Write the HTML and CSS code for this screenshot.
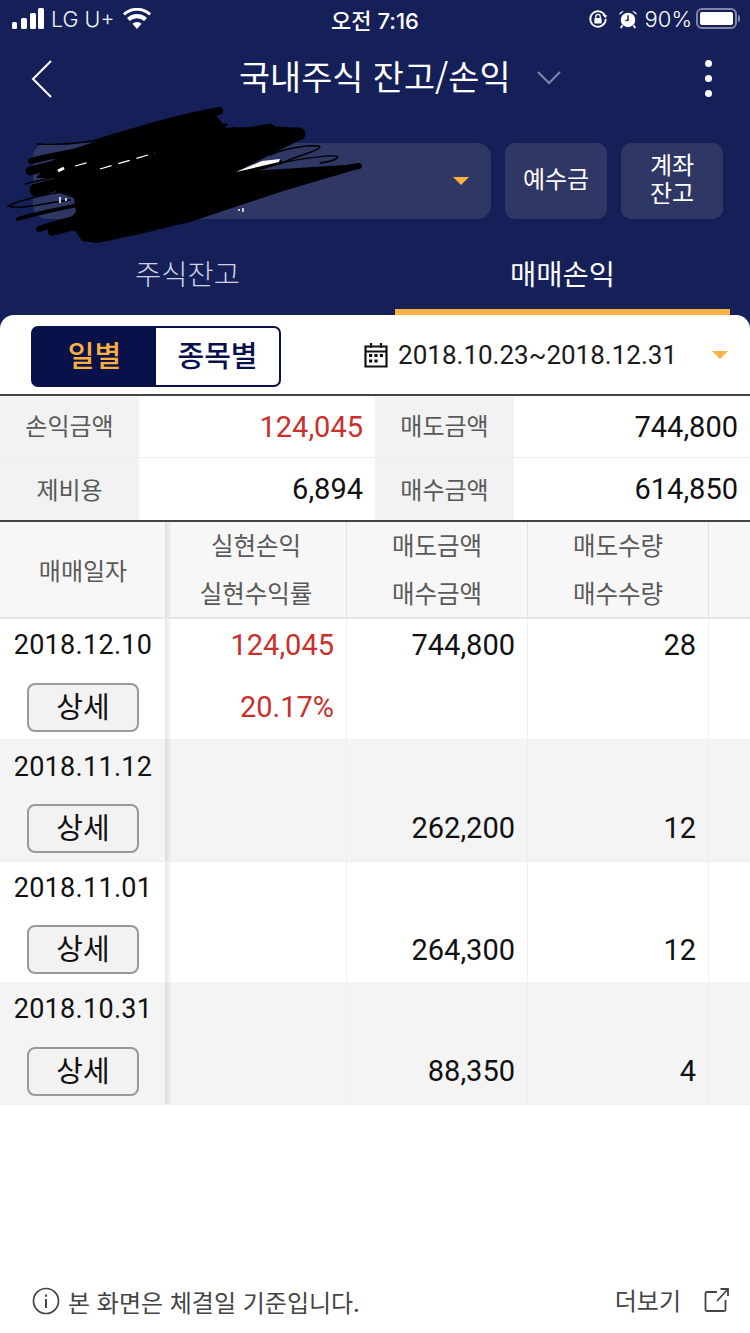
FILE: index.html
```html
<!DOCTYPE html>
<html lang="ko">
<head>
<meta charset="utf-8">
<title>국내주식 잔고/손익</title>
<link rel="stylesheet" href="styles.css">
</head>
<body>
<div class="app">
  <header class="top">
    <div class="status">
      <div class="status-side">
        <svg class="signal" width="33" height="22" viewBox="0 0 33 22"><rect x="0" y="14" width="5" height="7" rx="1.500"/><rect x="9" y="10" width="6" height="11" rx="1.500"/><rect x="18" y="5" width="6" height="16" rx="1.500"/><rect x="26" y="0" width="6" height="21" rx="1.500"/></svg>
        <span class="carrier">LG U+</span>
        <svg class="wifi" width="28" height="22" viewBox="0 0 28 22"><path d="M14 21l-4.600-5.200a6.600 6.600 0 0 1 9.200 0zM6.800 13l-2.800-3a14.600 14.600 0 0 1 20 0l-2.800 3a10.600 10.600 0 0 0-14.400 0zM1.800 7.500L0 5.200a21 21 0 0 1 28 0l-1.800 2.300a18 18 0 0 0-24.400 0z"/></svg>
      </div>
      <div class="status-time">오전 7:16</div>
      <div class="status-side status-right">
        <svg width="20" height="20" viewBox="0 0 22 22" class="lock"><path d="M18.500 7A8.500 8.500 0 1 0 19.500 11" fill="none" stroke="#fff" stroke-width="2"/><path d="M16 6.500l5 .5-1.500 3.500z" fill="#fff"/><rect x="7" y="10" width="8" height="6" rx="1" fill="#fff"/><path d="M8.500 10V8.500a2.500 2.500 0 0 1 5 0V10" fill="none" stroke="#fff" stroke-width="1.400"/></svg>
        <svg width="20" height="20" viewBox="0 0 22 22" class="alarm"><circle cx="11" cy="12" r="8" fill="#fff"/><path d="M11 7v5.500h-3" fill="none" stroke="#152058" stroke-width="1.600"/><path d="M1.500 6.500a4 4 0 0 1 5-4zM20.500 6.500a4 4 0 0 0-5-4z" fill="#fff"/><path d="M5 18l-2 3M17 18l2 3" stroke="#fff" stroke-width="2"/></svg>
        <span class="battery-pct">90%</span>
        <span class="battery"><span class="battery-fill"></span></span>
        <span class="battery-nub"></span>
      </div>
    </div>

    <div class="titlebar">
      <svg class="back" width="22" height="40" viewBox="0 0 22 40"><path d="M20 2L2 20l18 18" fill="none" stroke="#fff" stroke-width="2"/></svg>
      <div class="title-group">
        <h1 class="title">국내주식 잔고/손익</h1>
        <svg class="title-caret" width="24" height="14" viewBox="0 0 24 14"><path d="M1 1l11 11L23 1" fill="none" stroke="#7f87a8" stroke-width="2"/></svg>
      </div>
      <div class="more"><i></i><i></i><i></i></div>
    </div>

    <div class="account-row">
      <div class="account">
        <span class="caret"></span>
      </div>
      <button class="chip">예수금</button>
      <button class="chip">계좌<br>잔고</button>
      <svg class="scribble" width="380" height="150" viewBox="0 0 380 150">
        <g fill="none" stroke="#000" stroke-linecap="round">
          <path stroke-width="1.500" d="M37 44C60 45 85 44 110 37"/>
          <path stroke-width="8" d="M100 42C140 30 180 18 219 11"/>
          <path stroke-width="3" d="M100 44C140 34 190 28 226 25"/>
          <path stroke-width="3" d="M150 40C180 36 210 33 232 31"/>
          <path stroke-width="6" d="M31 61C90 46 150 42 235 30"/>
          <path stroke-width="9" d="M30 71C100 52 180 46 270 28"/>
          <path stroke-width="1.500" d="M25 84C100 66 200 44 296 29"/>
          <path stroke-width="13" d="M36 90C120 66 200 50 299 34"/>
          <path stroke-width="1.500" d="M8 106C30 96 60 92 90 88"/>
          <path stroke-width="1.500" d="M8 106C20 110 40 104 70 100"/>
          <path stroke-width="4" d="M18 119C80 100 200 88 280 62"/>
          <path stroke-width="6" d="M39 129C100 108 230 88 359 66"/>
          <path stroke-width="8" d="M52 132C100 118 160 112 230 96"/>
          <path stroke-width="1.500" d="M270 55C290 46 320 44 320 47C318 52 300 54 280 64"/>
          <path stroke-width="1.500" d="M285 62C305 58 336 54 338 57C336 60 328 62 320 63"/>
        </g>
        <path fill="#000" d="M70 50L100 40L215 14L226 28L270 26L300 28L304 38L236 72L361 64L361 68L280 92L190 122L140 134L97 143L82 141L76 132L66 122L76 112L74 98L56 92L60 78L36 78L50 62z"/>
        <g fill="none" stroke="#fff">
          <path stroke-width="3" d="M58 71L64 68"/>
          <path stroke-width="1.200" stroke-dasharray="12 7" d="M75 66L90 62M100 69L155 53"/>
          <path stroke-width="1.500" d="M60 97V103M66 98V101M238 110H240M243 108V112"/>
        </g>
        <path fill="#fff" d="M236 72L262 61L280 59L279 62L262 66z"/>
      </svg>
    </div>

    <nav class="tabs">
      <div class="tab">주식잔고</div>
      <div class="tab tab-on">매매손익</div>
    </nav>
  </header>

  <main class="panel">
    <div class="filter">
      <div class="toggle">
        <div class="toggle-on">일별</div>
        <div class="toggle-off">종목별</div>
      </div>
      <div class="range">
        <svg width="24" height="26" viewBox="0 0 24 26"><path d="M1.500 4.500h21v20h-21zM1.500 9.500h21" fill="none" stroke="#111" stroke-width="2.200"/><path d="M7 1v5M17 1v5" stroke="#111" stroke-width="2.200"/><g fill="#111"><rect x="5" y="12" width="3.200" height="3"/><rect x="10.400" y="12" width="3.200" height="3"/><rect x="15.800" y="12" width="3.200" height="3"/><rect x="5" y="17.500" width="3.200" height="3"/><rect x="10.400" y="17.500" width="3.200" height="3"/></g></svg>
        <span class="range-text">2018.10.23~2018.12.31</span>
        <span class="caret range-caret"></span>
      </div>
    </div>

    <section class="summary">
      <div class="sum-label">손익금액</div><div class="sum-value red">124,045</div>
      <div class="sum-label">매도금액</div><div class="sum-value">744,800</div>
      <div class="sum-label">제비용</div><div class="sum-value">6,894</div>
      <div class="sum-label">매수금액</div><div class="sum-value">614,850</div>
    </section>

    <section class="table">
      <div class="row head">
        <div class="cell c-date head-single">매매일자</div>
        <div class="cell c-num head-cell"><span>실현손익</span><span>실현수익률</span></div>
        <div class="cell c-num head-cell"><span>매도금액</span><span>매수금액</span></div>
        <div class="cell c-num head-cell"><span>매도수량</span><span>매수수량</span></div>
        <div class="cell c-rest"></div>
      </div>

      <div class="row r1">
        <div class="cell c-date"><span class="date">2018.12.10</span><button class="detail">상세</button></div>
        <div class="cell c-num val red"><span>124,045</span><span>20.17%</span></div>
        <div class="cell c-num val"><span>744,800</span><span></span></div>
        <div class="cell c-num val"><span>28</span><span></span></div>
        <div class="cell c-rest"></div>
      </div>
      <div class="row r2 alt">
        <div class="cell c-date"><span class="date">2018.11.12</span><button class="detail">상세</button></div>
        <div class="cell c-num val"><span></span><span></span></div>
        <div class="cell c-num val"><span></span><span>262,200</span></div>
        <div class="cell c-num val"><span></span><span>12</span></div>
        <div class="cell c-rest"></div>
      </div>
      <div class="row r3">
        <div class="cell c-date"><span class="date">2018.11.01</span><button class="detail">상세</button></div>
        <div class="cell c-num val"><span></span><span></span></div>
        <div class="cell c-num val"><span></span><span>264,300</span></div>
        <div class="cell c-num val"><span></span><span>12</span></div>
        <div class="cell c-rest"></div>
      </div>
      <div class="row r4 alt">
        <div class="cell c-date"><span class="date">2018.10.31</span><button class="detail">상세</button></div>
        <div class="cell c-num val"><span></span><span></span></div>
        <div class="cell c-num val"><span></span><span>88,350</span></div>
        <div class="cell c-num val"><span></span><span>4</span></div>
        <div class="cell c-rest"></div>
      </div>
    </section>

    <footer class="foot">
      <div class="foot-note">
        <svg width="28" height="28" viewBox="0 0 28 28"><circle cx="14" cy="14" r="12.500" fill="none" stroke="#444" stroke-width="1.700"/><rect x="13" y="12" width="2" height="9" fill="#444"/><rect x="13" y="7.500" width="2" height="2.200" fill="#444"/></svg>
        <span>본 화면은 체결일 기준입니다.</span>
      </div>
      <div class="foot-more">
        <span>더보기</span>
        <svg width="26" height="26" viewBox="0 0 26 26"><path d="M13 5H3a1.500 1.500 0 0 0-1.500 1.500v16A1.500 1.500 0 0 0 3 24h17a1.500 1.500 0 0 0 1.500-1.500V13" fill="none" stroke="#444" stroke-width="1.800"/><path d="M13 14L24 2M16.500 2H24v7" fill="none" stroke="#444" stroke-width="1.800"/></svg>
      </div>
    </footer>
  </main>
</div>
</body>
</html>
```

FILE: styles.css
```css
* { box-sizing: border-box; }
html, body { margin: 0; padding: 0; }
body {
  width: 750px;
  height: 1333px;
  overflow: hidden;
  font-family: Roboto, "Noto Sans CJK KR", sans-serif;
  color: #111;
}
.app {
  width: 750px;
  height: 1333px;
  display: flex;
  flex-direction: column;
  background: #152058;
}
.top { height: 315px; flex: none; color: #fff; }

/* status bar */
.status {
  height: 37px;
  padding: 0 10px 0 12px;
  display: grid;
  grid-template-columns: 1fr auto 1fr;
  align-items: center;
}
.status-side { display: flex; align-items: center; }
.status-right { justify-content: flex-end; }
.signal { fill: #fff; }
.wifi { fill: #fff; margin-left: 9px; }
.carrier { font-family: Inter, sans-serif; font-size: 21.500px; margin-left: 6px; color: #f2f3f8; font-weight: 300; }
.status-time { font-family: Inter, "Noto Sans CJK KR", sans-serif; font-size: 22px; font-weight: 500; margin-left: -2px; }
.lock { margin-right: 10px; }
.alarm { margin-right: 7px; }
.battery-pct { font-family: Inter, sans-serif; font-size: 22px; font-weight: 300; margin-right: 4px; }
.battery {
  width: 41px;
  height: 21px;
  border: 2px solid #7f87a8;
  border-radius: 6px;
  padding: 2px;
  display: block;
}
.battery-fill { display: block; height: 100%; background: #fff; border-radius: 2px; width: 33px; }
.battery-nub { width: 2px; height: 7px; background: #7f87a8; margin-left: 1px; border-radius: 0 2px 2px 0; }

/* title */
.titlebar {
  height: 79px;
  padding: 0 38px 0 31px;
  display: flex;
  align-items: center;
}
.back { flex: none; margin-top: 4px; }
.title-group { display: flex; align-items: center; gap: 26px; margin-left: 186px; padding-bottom: 1px; }
.title { margin: 0; font-family: "Noto Sans CJK KR", sans-serif; font-size: 33.800px; font-weight: 400; line-height: 44px; }
.title-caret { margin-top: 4px; }
.more { display: flex; flex-direction: column; gap: 8px; align-items: center; margin-left: auto; margin-top: 4px; }
.more i { width: 7px; height: 7px; border-radius: 50%; background: #fff; display: block; }

/* account */
.account-row {
  position: relative;
  margin-top: 27px;
  padding: 0 27px 0 33px;
  display: flex;
  gap: 14px;
  height: 76px;
}
.account {
  flex: 1;
  background: #2f3764;
  border-radius: 14px;
  display: flex;
  align-items: center;
  justify-content: flex-end;
  padding-right: 22px;
}
.caret {
  width: 0;
  height: 0;
  border-left: 8px solid transparent;
  border-right: 8px solid transparent;
  border-top: 8px solid #fbb040;
  display: block;
}
.chip {
  width: 102px;
  border: 0;
  border-radius: 10px;
  background: #2f3764;
  color: #fff;
  font-family: "Noto Sans CJK KR", sans-serif;
  font-size: 24px;
  line-height: 28px;
  padding: 0 0 6px;
}
.scribble { position: absolute; left: 0; top: -43px; }

/* tabs */
.tabs { display: flex; height: 96px; }
.tab {
  width: 375px;
  height: 96px;
  padding-top: 35px;
  text-align: center;
  font-family: "Noto Sans CJK KR", sans-serif;
  font-size: 28.500px;
  line-height: 38px;
  color: #cfd3e2;
  font-weight: 300;
}
.tab-on { width: 335px; margin-left: 20px; color: #fff; font-weight: 400; border-bottom: 6px solid #fbb040; }

/* panel */
.panel {
  flex: 1;
  background: #fff;
  border-radius: 14px 14px 0 0;
  display: flex;
  flex-direction: column;
  min-height: 0;
}
.filter {
  height: 81px;
  flex: none;
  padding: 11px 22px 0 31px;
  display: flex;
  justify-content: space-between;
  border-bottom: 2px solid #444;
}
.toggle {
  width: 250px;
  height: 61px;
  display: flex;
  border: 2px solid #08114a;
  border-radius: 7px;
  overflow: hidden;
  font-family: "Noto Sans CJK KR", sans-serif;
  font-size: 29px;
  font-weight: 500;
  background: #08114a;
}
.toggle-on { width: 123px; color: #fbb040; display: flex; align-items: center; justify-content: center; padding-bottom: 5px; }
.toggle-off { flex: 1; background: #fff; color: #08114a; display: flex; align-items: center; justify-content: center; padding-bottom: 5px; }
.range { display: flex; align-items: center; height: 61px; padding-bottom: 4px; }
.range-text { font-size: 26px; color: #1a1a1a; margin-left: 10px; }
.range-caret { margin-left: 35px; }

.summary {
  flex: none;
  height: 126px;
  display: grid;
  grid-template-columns: 139px 236px 139px 236px;
  grid-template-rows: 61px 62px;
  row-gap: 0;
  border-bottom: 2px solid #444;
  padding-top: 1px;
}
.sum-label {
  background: #f2f2f2;
  color: #595959;
  font-family: "Noto Sans CJK KR", sans-serif;
  font-size: 24px;
  font-weight: 400;
  display: flex;
  align-items: center;
  justify-content: center;
  padding-bottom: 2px;
}
.sum-label:nth-child(-n+3) { border-bottom: 1px solid #ececec; padding-bottom: 6px; }
.sum-value {
  border-bottom: 1px solid #ececec;
  font-size: 29px;
  display: flex;
  align-items: center;
  justify-content: flex-end;
  padding: 0 12px 0 0;
  color: #111;
}
.sum-value:nth-child(n+5) { border-bottom: 0; }
.red { color: #c9302c; }
.sum-value.red { color: #c9302c; }

.table { flex: none; }
.row { display: grid; grid-template-columns: 166px 181px 181px 181px 41px; grid-template-rows: 100%; border-bottom: 1px solid #eeeeee; }
.head { height: 97px; background: #f7f7f7; border-bottom: 2px solid #e6e6e6; }
.r1 { height: 120px; --pad-date: 6px; --pad-val: 6px; --gap: 18px; border-bottom: 0; }
.r2 { height: 123px; --pad-date: 8px; --pad-val: 7px; --gap: 17px; }
.r3 { height: 120px; --pad-date: 6px; --pad-val: 6px; --gap: 17px; border-bottom: 0; }
.r4 { height: 123px; --pad-date: 7px; --pad-val: 7px; --gap: 18px; }
.alt { background: #f4f4f4; }
.cell { border-right: 1px solid #efefef; min-width: 0; }
.head .cell { border-right-color: #e2e2e2; }
.c-rest { border-right: 0; }
.c-date {
  position: relative;
  display: flex;
  flex-direction: column;
  align-items: center;
  padding-top: var(--pad-date);
  border-right: 0;
}
.c-date::after {
  content: "";
  position: absolute;
  left: 100%;
  top: 0;
  bottom: 0;
  width: 7px;
  margin-left: -1px;
  background: linear-gradient(to right, rgba(0, 0, 0, 0.1), rgba(0, 0, 0, 0));
}
.head-single { justify-content: center; padding: 0; color: #595959; font-family: "Noto Sans CJK KR", sans-serif; font-size: 24px; }
.head-cell { display: flex; flex-direction: column; align-items: center; color: #595959; font-family: "Noto Sans CJK KR", sans-serif; font-size: 24.500px; }
.head-cell span { height: 48px; line-height: 46px; }
.date { font-size: 27px; line-height: 40px; color: #111; letter-spacing: 0.3px; }
.detail {
  margin-top: var(--gap);
  width: 112px;
  height: 49px;
  padding: 0 0 6px;
  border: 2px solid #999;
  border-radius: 8px;
  background: #f2f2f2;
  color: #111;
  font-family: "Noto Sans CJK KR", sans-serif;
  font-size: 29px;
  line-height: 38px;
}
.val { display: flex; flex-direction: column; align-items: flex-end; padding: var(--pad-val) 12px 0 0; font-size: 29px; }
.val span { display: block; height: 61px; line-height: 40px; }
.val span:last-child { height: 42px; line-height: 42px; }

.foot {
  flex: 1;
  display: flex;
  align-items: flex-end;
  justify-content: space-between;
  padding: 0 20px 12px 32px;
  color: #444;
  font-family: "Noto Sans CJK KR", sans-serif;
  font-size: 24px;
  font-weight: 400;
}
.foot-note, .foot-more { display: flex; align-items: center; height: 40px; }
.foot-note { gap: 8px; }
.foot-more { gap: 23px; padding-bottom: 3px; }
```
